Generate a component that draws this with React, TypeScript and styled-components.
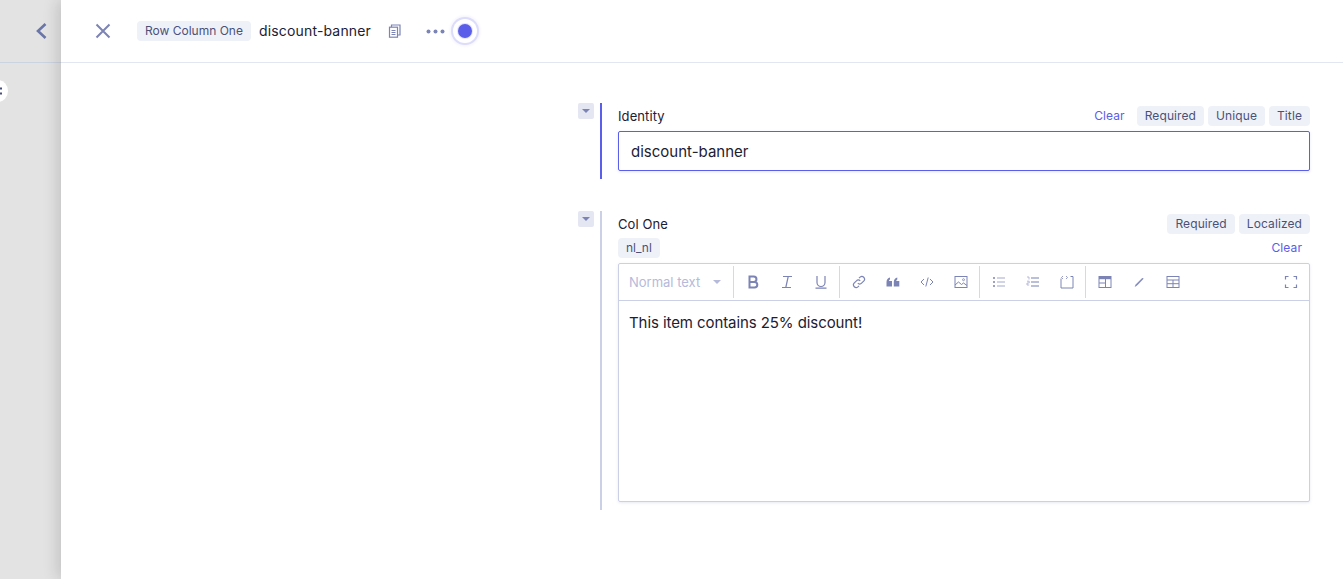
import React from "react";
import styled, { createGlobalStyle } from "styled-components";

const Global = createGlobalStyle`
  html, body { margin: 0; padding: 0; height: 100%; background: #fff; overflow: hidden; }
  body { font-family: Inter, "Liberation Sans", sans-serif; color: #1c2033; -webkit-font-smoothing: antialiased; }
  #root { height: 100%; }
`;

const Page = styled.div`
  display: flex;
  width: 1343px;
  height: 579px;
  overflow: hidden;
`;
const Rail = styled.aside`
  position: relative;
  flex: 0 0 61px;
  background: #e3e3e3;
`;
const RailHead = styled.div`
  height: 62px;
  border-bottom: 1px solid #ccd3e0;
  display: flex;
  align-items: center;
  justify-content: flex-end;
  padding-right: 13px;
`;
const Handle = styled.div`
  position: absolute;
  left: -12px;
  top: 80px;
  width: 20px;
  height: 22px;
  background: #fff;
  border-radius: 50%;
  display: flex;
  align-items: center;
  justify-content: flex-end;
  svg { display: block; margin-right: 6px; }
`;
const Panel = styled.main`
  position: relative;
  flex: 1;
  background: #fff;
  box-shadow: -4px 0 14px rgba(0, 0, 0, 0.14);
  display: flex;
  flex-direction: column;
`;
const Header = styled.header`
  height: 62px;
  border-bottom: 1px solid #e2e6f0;
  display: flex;
  align-items: center;
  padding-left: 33px;
`;
const CloseBtn = styled.span`
  display: flex;
  width: 18px;
  margin-right: 25px;
`;
const HeaderTag = styled.span`
  height: 20px;
  line-height: 20px;
  padding: 0 8px;
  background: #eff1f9;
  border-radius: 4px;
  font-size: 12px;
  color: #4a5178;
  white-space: nowrap;
`;
const Title = styled.span`
  margin-left: 8px;
  font-size: 14px;
  letter-spacing: 0.17px;
  line-height: 20px;
  color: #1c2033;
  white-space: nowrap;
`;
const CopyIcon = styled.span`
  display: flex;
  margin-left: 17px;
`;
const More = styled.span`
  display: flex;
  margin-left: 24px;
`;
const Status = styled.span`
  width: 14px;
  height: 14px;
  margin-left: 13px;
  border-radius: 50%;
  background: #5a5ee8;
  box-shadow: 0 0 0 1px #e4e4fb, 0 0 0 5px #fff, 0 0 0 7px #dcdcfb, 0 0 3px 8px #f1f1fd;
`;
const Form = styled.div`
  align-self: flex-end;
  width: 732px;
  margin-right: 33px;
  padding-top: 40px;
  display: flex;
  flex-direction: column;
  gap: 32px;
`;
const Field = styled.section`
  display: flex;
`;
const Collapse = styled.span`
  flex: 0 0 16px;
  height: 16px;
  background: #e4e6f2;
  border-radius: 2px;
  display: flex;
  align-items: center;
  justify-content: center;
`;
const Bar = styled.div<{ $active?: boolean }>`
  flex: 0 0 2px;
  margin: 0 16px 0 6px;
  background: ${(p) => (p.$active ? "#5a5ee8" : "#ccd0e6")};
`;
const Body = styled.div`
  flex: 1;
  min-width: 0;
  padding-bottom: 8px;
`;
const LabelRow = styled.div`
  display: flex;
  align-items: center;
  height: 20px;
  padding-top: 3px;
  margin-bottom: 5px;
`;
const Label = styled.label`
  font-size: 13px;
  line-height: 20px;
  font-weight: 400;
  letter-spacing: 0.1px;
  color: #1c2033;
  margin-right: auto;
`;
const ClearLink = styled.span`
  font-size: 12px;
  letter-spacing: 0.1px;
  line-height: 20px;
  color: #5a5ee8;
`;
const Tag = styled.span`
  height: 20px;
  line-height: 20px;
  padding: 0 8px;
  margin-left: 4px;
  background: #eff1f9;
  border-radius: 4px;
  font-size: 12px;
  letter-spacing: 0.1px;
  color: #4a5178;
`;
const FirstClear = styled(ClearLink)`
  margin-right: 8px;
`;
const LocaleRow = styled.div`
  display: flex;
  justify-content: space-between;
  align-items: center;
  height: 20px;
  margin: -1px 0 5px;
`;
const LocaleTag = styled(Tag)`
  margin-left: 0;
  letter-spacing: 0;
`;
const LocaleClear = styled(ClearLink)`
  margin-right: 8px;
`;
const TextInput = styled.div`
  height: 40px;
  box-sizing: border-box;
  border: 1px solid #5a5ee8;
  border-radius: 2px;
  padding: 0 12px;
  font-size: 15px;
  line-height: 40px;
  color: #1c2033;
  box-shadow: 0 1px 3px rgba(90, 94, 232, 0.16);
`;
const Editor = styled.div`
  height: 239px;
  box-sizing: border-box;
  border: 1px solid #ccd0e6;
  border-radius: 2px;
  box-shadow: 0 1px 3px rgba(70, 80, 140, 0.12);
  display: flex;
  flex-direction: column;
`;
const Toolbar = styled.div`
  flex: 0 0 37px;
  box-sizing: border-box;
  border-bottom: 1px solid #ccd0e6;
  display: flex;
  align-items: center;
`;
const StyleSelect = styled.div`
  width: 114px;
  box-sizing: border-box;
  padding: 0 12px 0 10px;
  display: flex;
  align-items: center;
  justify-content: space-between;
  font-size: 13px;
  color: #b5badb;
`;
const Divider = styled.span`
  flex: 0 0 1px;
  height: 32px;
  background: #d5d8ea;
  margin: 0 2px 0 1px;
`;
const FirstDivider = styled(Divider)`
  margin-left: 0;
`;
const ToolBtn = styled.span`
  flex: 0 0 34px;
  height: 34px;
  display: flex;
  align-items: center;
  justify-content: center;
`;
const FullBtn = styled(ToolBtn)`
  margin-left: auto;
  margin-right: 1px;
`;
const Content = styled.div`
  padding: 12px 10px;
  font-size: 15px;
  letter-spacing: -0.08px;
  line-height: 20px;
  color: #1c2033;
`;

const C = "#7c84b5";
const Ico = ({ children, s = 14 }: { children: React.ReactNode; s?: number }) => (
  <svg width={s} height={s} viewBox="0 0 14 14" fill="none" stroke={C} strokeWidth="1.2">
    {children}
  </svg>
);

const Caret = ({ color = "#7c84b5" }: { color?: string }) => (
  <svg width="8" height="4" viewBox="0 0 8 4"><path d="M0 0h8L4 4z" fill={color} /></svg>
);

export default function App() {
  return (
    <Page>
      <Global />
      <Rail>
        <RailHead>
          <svg width="13" height="18" viewBox="0 0 13 18" fill="none" stroke="#6b76a8" strokeWidth="2.6">
            <path d="M10.5 2L3 9l7.5 7" />
          </svg>
        </RailHead>
        <Handle>
          <svg width="2" height="8" viewBox="0 0 2 8" fill="#4a5178"><rect width="2" height="2" y="0.5" /><rect width="2" height="2" y="5.5" /></svg>
        </Handle>
      </Rail>
      <Panel>
        <Header>
          <CloseBtn>
            <svg width="18" height="18" viewBox="0 0 18 18" fill="none" stroke="#7c84b5" strokeWidth="2">
              <path d="M2.5 2.5l13 13M15.5 2.5l-13 13" />
            </svg>
          </CloseBtn>
          <HeaderTag>Row Column One</HeaderTag>
          <Title>discount-banner</Title>
          <CopyIcon>
            <Ico>
              <path d="M3.5 3V1h8.5v10h-2" />
              <rect x="1.5" y="3.2" width="8" height="10" />
              <path d="M3.5 6.5h4M3.5 8.5h4M3.5 10.5h4" strokeWidth="1" />
            </Ico>
          </CopyIcon>
          <More>
            <svg width="19" height="5" viewBox="0 0 19 5" fill="#7c84b5">
              <circle cx="2.5" cy="2.5" r="2" /><circle cx="9.5" cy="2.5" r="2" /><circle cx="16.5" cy="2.5" r="2" />
            </svg>
          </More>
          <Status />
        </Header>
        <Form>
          <Field>
            <Collapse><Caret /></Collapse>
            <Bar $active />
            <Body>
              <LabelRow>
                <Label>Identity</Label>
                <FirstClear>Clear</FirstClear>
                <Tag>Required</Tag>
                <Tag>Unique</Tag>
                <Tag>Title</Tag>
              </LabelRow>
              <TextInput>discount-banner</TextInput>
            </Body>
          </Field>
          <Field>
            <Collapse><Caret /></Collapse>
            <Bar />
            <Body>
              <LabelRow>
                <Label>Col One</Label>
                <Tag>Required</Tag>
                <Tag>Localized</Tag>
              </LabelRow>
              <LocaleRow>
                <LocaleTag>nl_nl</LocaleTag>
                <LocaleClear>Clear</LocaleClear>
              </LocaleRow>
              <Editor>
                <Toolbar>
                  <StyleSelect>Normal text<Caret color="#b5badb" /></StyleSelect>
                  <FirstDivider />
                  <ToolBtn>
                    <Ico><path d="M3.5 1.5h4.2a2.7 2.7 0 010 5.5H3.5zM3.5 7h5a2.8 2.8 0 010 5.6h-5z" strokeWidth="2" /></Ico>
                  </ToolBtn>
                  <ToolBtn>
                    <Ico><path d="M3 1.5h9M2 12.5h9M8.2 1.5L5.8 12.5" /></Ico>
                  </ToolBtn>
                  <ToolBtn>
                    <Ico><path d="M3 1v6.5a4 4 0 008 0V1M1.5 13.2h11" /></Ico>
                  </ToolBtn>
                  <Divider />
                  <ToolBtn>
                    <Ico>
                      <path d="M5.8 8.2a2.6 2.6 0 003.8 0l2.3-2.3a2.7 2.7 0 00-3.8-3.8L7 3.2" />
                      <path d="M8.2 5.8a2.6 2.6 0 00-3.8 0L2.1 8.1a2.7 2.7 0 003.8 3.8L7 10.8" />
                    </Ico>
                  </ToolBtn>
                  <ToolBtn>
                    <svg width="14" height="14" viewBox="0 0 14 14" fill={C}>
                      <path d="M0.5 7C.5 4.5 2 3 4 2.5v2C3.3 4.8 3 5.3 3 6h3v5.5H.5zM7.8 7c0-2.5 1.5-4 3.5-4.5v2c-.7.3-1 .8-1 1.5h3v5.5H7.8z" />
                    </svg>
                  </ToolBtn>
                  <ToolBtn>
                    <Ico><path d="M4 4L1 7l3 3M10 4l3 3-3 3M8.2 2.5L5.8 11.5" strokeWidth="1" /></Ico>
                  </ToolBtn>
                  <ToolBtn>
                    <Ico>
                      <rect x="1" y="1.5" width="12" height="11" strokeWidth="1" />
                      <path d="M1 10l3.5-3 3 2.5 2-1.5 3.5 2.5" strokeWidth="1" />
                      <circle cx="9.5" cy="4.7" r="1" strokeWidth="0.8" />
                    </Ico>
                  </ToolBtn>
                  <Divider />
                  <ToolBtn>
                    <Ico>
                      <path d="M5 3h8M5 7h8M5 11h8" stroke="#a4aad0" />
                      <path d="M1 3h2M1 7h2M1 11h2" strokeWidth="1.6" />
                    </Ico>
                  </ToolBtn>
                  <ToolBtn>
                    <Ico>
                      <path d="M5 3h8M5 7h8M5 11h8" stroke="#a4aad0" strokeWidth="1.4" />
                      <path d="M1 2h2v2.5M1 6.2h2.2V8H1v2h2.2" stroke="#a4aad0" strokeWidth="0.8" />
                    </Ico>
                  </ToolBtn>
                  <ToolBtn>
                    <Ico>
                      <path d="M1 3.5V13h12V1.5h-2.5" strokeWidth="1" />
                      <path d="M3 1L1.5 2.5 3 4M6 1l1.5 1.5L6 4" strokeWidth="0.8" />
                    </Ico>
                  </ToolBtn>
                  <Divider />
                  <ToolBtn>
                    <Ico>
                      <rect x="1" y="1.5" width="12" height="11" strokeWidth="1" />
                      <path d="M1 3h12" strokeWidth="2.4" />
                      <path d="M1 8h6.5M7.5 4v8.5" strokeWidth="1" />
                    </Ico>
                  </ToolBtn>
                  <ToolBtn>
                    <Ico><path d="M3 11.5l1-2L10.5 3l.8.8-6.4 6.6z" fill={C} strokeWidth="0.4" /></Ico>
                  </ToolBtn>
                  <ToolBtn>
                    <Ico>
                      <rect x="1" y="1.5" width="12" height="11" strokeWidth="1" />
                      <path d="M1 5h12M1 8.7h12M7 5v7.5" strokeWidth="1" />
                    </Ico>
                  </ToolBtn>
                  <FullBtn>
                    <Ico><path d="M1.5 4.5v-3h3M9.5 1.5h3v3M12.5 9.5v3h-3M4.5 12.5h-3v-3" /></Ico>
                  </FullBtn>
                </Toolbar>
                <Content>This item contains 25% discount!</Content>
              </Editor>
            </Body>
          </Field>
        </Form>
      </Panel>
    </Page>
  );
}
